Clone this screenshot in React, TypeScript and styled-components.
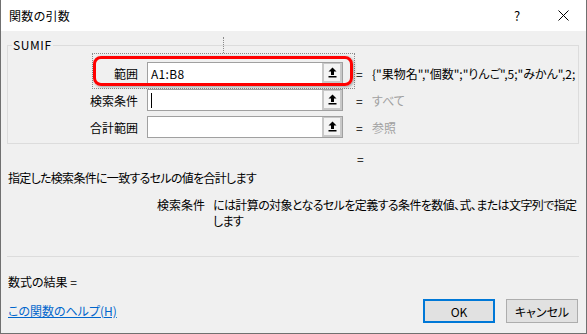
import React from "react";
import styled, { createGlobalStyle } from "styled-components";

const GlobalStyle = createGlobalStyle`
    html, body {
        margin: 0;
        padding: 0;
        background: #ffffff;
    }
    body {
        font-family: "Noto Sans CJK JP", "Noto Sans", sans-serif;
        font-size: 12px;
        font-feature-settings: "palt" 1;
        color: #000000;
    }
`;

const colors = {
    face: "#f0f0f0",
    frame: "#707070",
    groupLine: "#dcdcdc",
    inputLine: "#a0a0a0",
    dimText: "#a0a0a0",
    accent: "#0078d7",
    link: "#0066cc",
    highlight: "#ff0000",
};

const Window = styled.div`
    width: 587px;
    height: 334px;
    box-sizing: border-box;
    border: 1px solid ${colors.frame};
    border-top: none;
    background: ${colors.face};
    display: flex;
    flex-direction: column;
    overflow: hidden;
`;

const TitleBar = styled.div`
    height: 31px;
    background: #ffffff;
    display: flex;
    align-items: center;
    padding-left: 8px;
    flex-shrink: 0;
`;

const Title = styled.div`
    flex: 1;
    line-height: 16px;
    letter-spacing: 0.3px;
`;

const TitleButton = styled.div`
    width: 46px;
    height: 31px;
    display: flex;
    align-items: center;
    justify-content: center;
    font-size: 13px;
`;

const Body = styled.div`
    flex: 1;
    display: flex;
    flex-direction: column;
    padding: 0 7px 0 6px;
`;

const Group = styled.fieldset`
    margin: 6px 0 0 0;
    padding: 0 0 5px 0;
    border: 1px solid ${colors.groupLine};
    min-width: 0;
`;

const GroupTitle = styled.legend`
    margin-left: 4px;
    padding: 0 1px;
    line-height: 16px;
    letter-spacing: 0.6px;
`;

const Rows = styled.div`
    position: relative;
    display: flex;
    flex-direction: column;
    gap: 5px;
    padding-top: 9px;
`;

const Row = styled.div`
    display: flex;
    align-items: center;
    height: 22px;
`;

const Label = styled.div`
    width: 130px;
    margin-right: 9px;
    text-align: right;
    white-space: nowrap;
`;

const Field = styled.div`
    width: 196px;
    height: 22px;
    box-sizing: border-box;
    border: 1px solid ${colors.inputLine};
    background: #ffffff;
    display: flex;
    align-items: stretch;
`;

const FieldText = styled.div`
    flex: 1;
    display: flex;
    align-items: center;
    padding-left: 3px;
    position: relative;
    letter-spacing: 0.3px;
`;

const Caret = styled.span`
    width: 1px;
    height: 15px;
    background: #000000;
`;

const RefButton = styled.div`
    width: 20px;
    box-sizing: border-box;
    background: #c8c8c8;
    padding: 1px 2px 2px 2px;
    display: flex;
`;

const RefButtonFace = styled.div`
    flex: 1;
    background: #f4f4f4;
    display: flex;
    align-items: center;
    justify-content: center;
`;

const Eq = styled.div`
    margin-left: 13px;
    width: 16px;
`;

const Value = styled.div<{ $dim?: boolean }>`
    flex: 1;
    white-space: nowrap;
    overflow: hidden;
    color: ${(p) => (p.$dim ? colors.dimText : "#000000")};
`;

const Highlight = styled.div`
    position: absolute;
    left: 85px;
    top: 3px;
    width: 260px;
    height: 30px;
    box-sizing: border-box;
    border: 3px solid ${colors.highlight};
    border-radius: 8px;
    box-shadow: 1px 1px 3px rgba(0, 0, 0, 0.35);
    pointer-events: none;
`;

const FocusFrame = styled.div`
    position: absolute;
    left: 84px;
    top: 0px;
    width: 263px;
    height: 36px;
    box-sizing: border-box;
    border: 1px dotted #8a8a8a;
    pointer-events: none;
`;

const FocusTick = styled.div`
    position: absolute;
    left: 215px;
    top: -16px;
    height: 16px;
    border-left: 1px dotted #8a8a8a;
`;

const ResultEq = styled.div`
    margin-top: 7px;
    padding-left: 350px;
    line-height: 16px;
`;

const Description = styled.div`
    margin-top: 3px;
    line-height: 16px;
    padding-left: 1px;
    letter-spacing: -0.7px;
`;

const ArgHelp = styled.div`
    margin-top: 11px;
    display: flex;
    gap: 8px;
    line-height: 16px;
`;

const ArgName = styled.div`
    width: 198px;
    text-align: right;
    flex-shrink: 0;
`;

const ArgText = styled.div`
    width: 380px;
    flex-shrink: 0;
    letter-spacing: -0.6px;
    white-space: nowrap;
`;

const Separator = styled.div`
    margin-top: 27px;
    height: 1px;
    background: ${colors.groupLine};
`;

const Result = styled.div`
    margin-top: 17px;
    line-height: 16px;
    padding-left: 1px;
`;

const Footer = styled.div`
    margin-top: 9px;
    display: flex;
    align-items: center;
    padding-right: 1px;
`;

const HelpLink = styled.a`
    flex: 1;
    color: ${colors.link};
    text-decoration: underline;
    line-height: 16px;
    padding-left: 1px;
    cursor: pointer;
`;

const Button = styled.button<{ $primary?: boolean }>`
    all: unset;
    width: 72px;
    height: 24px;
    box-sizing: border-box;
    display: flex;
    align-items: center;
    justify-content: center;
    background: #e1e1e1;
    border: ${(p) => (p.$primary ? `2px solid ${colors.accent}` : "1px solid #adadad")};
    margin-left: ${(p) => (p.$primary ? "0" : "11px")};
    font-family: "Noto Sans CJK JP", "Noto Sans", sans-serif;
    font-size: 12px;
    font-feature-settings: "palt" 1;
    color: #000000;
`;

function UpArrow() {
    return (
        <svg width="9" height="11" viewBox="0 0 9 11">
            <path d="M4.5 0.5 L8.5 4.5 L6 4.5 L6 8 L3 8 L3 4.5 L0.5 4.5 Z" fill="#000" />
            <rect x="0.5" y="9" width="8" height="1.5" fill="#000" />
        </svg>
    );
}

function CloseIcon() {
    return (
        <svg width="11" height="11" viewBox="0 0 11 11">
            <path d="M0.5 0.5 L10.5 10.5 M10.5 0.5 L0.5 10.5" stroke="#000" strokeWidth="1" />
        </svg>
    );
}

type Arg = {
    label: string;
    text?: string;
    caret?: boolean;
    value: string;
    dim?: boolean;
};

const args: Arg[] = [
    { label: "範囲", text: "A1:B8", value: "{\"果物名\",\"個数\";\"りんご\",5;\"みかん\",2;" },
    { label: "検索条件", caret: true, value: "すべて", dim: true },
    { label: "合計範囲", value: "参照", dim: true },
];

function App() {
    return (
        <>
            <GlobalStyle />
            <Window>
                <TitleBar>
                    <Title>関数の引数</Title>
                    <TitleButton>?</TitleButton>
                    <TitleButton>
                        <CloseIcon />
                    </TitleButton>
                </TitleBar>
                <Body>
                    <Group>
                        <GroupTitle>SUMIF</GroupTitle>
                        <Rows>
                            {args.map((a) => (
                                <Row key={a.label}>
                                    <Label>{a.label}</Label>
                                    <Field>
                                        <FieldText>
                                            {a.text}
                                            {a.caret ? <Caret /> : null}
                                        </FieldText>
                                        <RefButton>
                                            <RefButtonFace>
                                                <UpArrow />
                                            </RefButtonFace>
                                        </RefButton>
                                    </Field>
                                    <Eq>=</Eq>
                                    <Value $dim={a.dim}>{a.value}</Value>
                                </Row>
                            ))}
                            <FocusTick />
                            <FocusFrame />
                            <Highlight />
                        </Rows>
                    </Group>
                    <ResultEq>=</ResultEq>
                    <Description>指定した検索条件に一致するセルの値を合計します</Description>
                    <ArgHelp>
                        <ArgName>検索条件</ArgName>
                        <ArgText>
                            には計算の対象となるセルを定義する条件を数値、式、または文字列で指定
                            <br />
                            します
                        </ArgText>
                    </ArgHelp>
                    <Separator />
                    <Result>数式の結果 =</Result>
                    <Footer>
                        <HelpLink>この関数のヘルプ(H)</HelpLink>
                        <Button $primary>OK</Button>
                        <Button>キャンセル</Button>
                    </Footer>
                </Body>
            </Window>
        </>
    );
}

export default App;
